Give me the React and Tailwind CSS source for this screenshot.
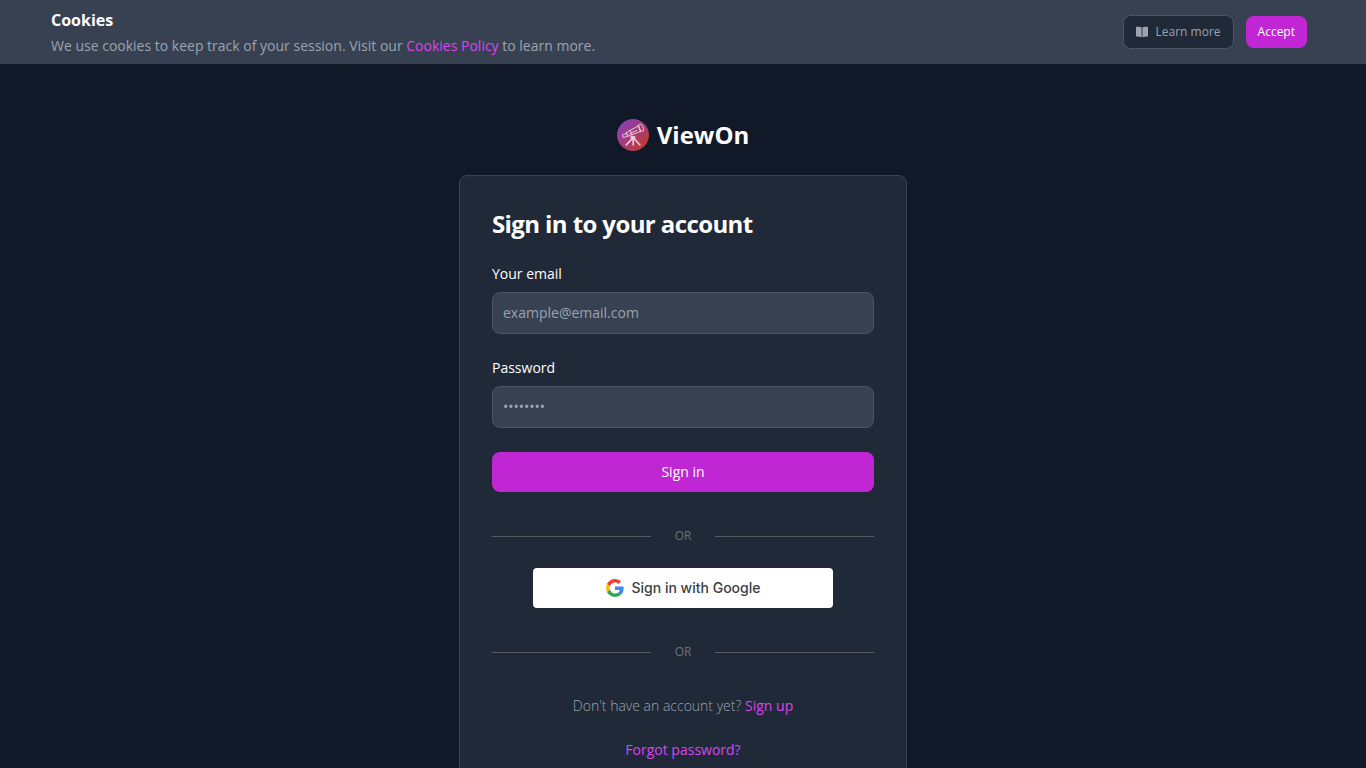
const FONT = "font-['Open_Sans',sans-serif]";

function BookIcon() {
  return (
    <svg className="h-3 w-3" viewBox="0 0 12 12" fill="currentColor" aria-hidden="true">
      <path d="M5.6 1.300C4 .9 2 .8.5.8.200.8 0 1 0 1.300v8.600c0 .3.200.5.500.500 1.700 0 3.500.2 5.100.8zM6.400 1.300C8 .9 10 .8 11.500.8c.3 0 .5.200.5.500v8.600c0 .3-.2.5-.5.500-1.700 0-3.500.2-5.100.8z" />
    </svg>
  );
}

function GoogleIcon() {
  return (
    <svg className="h-[18px] w-[18px]" viewBox="0 0 48 48" aria-hidden="true">
      <path fill="#EA4335" d="M24 9.500c3.540 0 6.710 1.220 9.210 3.600l6.850-6.850C35.900 2.380 30.470 0 24 0 14.620 0 6.510 5.380 2.560 13.220l7.980 6.190C12.430 13.720 17.740 9.500 24 9.500z" />
      <path fill="#4285F4" d="M46.980 24.550c0-1.570-.15-3.090-.38-4.550H24v9.020h12.940c-.58 2.960-2.260 5.480-4.780 7.180l7.730 6c4.510-4.180 7.090-10.360 7.090-17.650z" />
      <path fill="#FBBC05" d="M10.530 28.590c-.48-1.450-.76-2.990-.76-4.590s.27-3.140.76-4.590l-7.980-6.190C.92 16.460 0 20.120 0 24c0 3.880.92 7.540 2.560 10.780l7.970-6.190z" />
      <path fill="#34A853" d="M24 48c6.480 0 11.930-2.130 15.890-5.810l-7.730-6c-2.150 1.450-4.920 2.300-8.160 2.300-6.260 0-11.570-4.220-13.470-9.910l-7.980 6.190C6.510 42.620 14.620 48 24 48z" />
    </svg>
  );
}

function Logo() {
  return (
    <svg className="mr-2 h-8 w-8" viewBox="0 0 32 32" fill="none" aria-hidden="true">
      <defs>
        <linearGradient id="logo-bg" x1="4" y1="4" x2="27" y2="28" gradientUnits="userSpaceOnUse">
          <stop offset="0" stopColor="#8b3fb5" />
          <stop offset="0.5" stopColor="#a43c78" />
          <stop offset="1" stopColor="#c23a32" />
        </linearGradient>
      </defs>
      <circle cx="16" cy="16" r="16" fill="url(#logo-bg)" />
      <g stroke="#efc9d8" strokeLinejoin="round" strokeLinecap="round">
        {/* tube */}
        <path d="M5.500 16l4.200-1.700 1.200 2.600-4.200 1.700z" />
        <path d="M9.300 13.600l12.200-6.900 2.400 5.500-12.700 5z" />
        <path d="M21.300 6.200l2.600-1c1.800 1.700 2.800 3.800 2.800 6.300l-2.700 1.100z" />
        <path d="M13.300 11.500l1.900 4.200M12.600 14.700l7-3.200" />
        {/* tripod */}
        <path d="M14.300 17.400h3.600v2.100h-3.600z" fill="#efc9d8" />
        <path d="M15.300 19.500l-6 6.300M17 19.500l5.700 6.300M16.200 19.500v6.300" strokeWidth="1.700" />
      </g>
    </svg>
  );
}

function CookieBanner() {
  return (
    <div className="bg-[#374151]">
      <div className="mx-auto flex max-w-7xl items-center justify-between py-2 pr-4 pl-2">
        <div>
          <h2 className="text-base font-bold text-white">Cookies</h2>
          <p className="mt-1 text-sm text-[#9ca3af]">
            We use cookies to keep track of your session. Visit our{' '}
            <a href="#policy" className="text-[#d946ef] hover:underline">Cookies Policy</a> to learn more.
          </p>
        </div>
        <div className="flex shrink-0 items-center gap-3">
          <button type="button" className="flex h-[34px] items-center gap-2 rounded-lg border border-[#4b5563] bg-[#1f2937] px-3 text-xs text-[#9ca3af]">
            <BookIcon />
            Learn more
          </button>
          <button type="button" className="h-8 rounded-lg bg-[#c026d3] px-3 text-xs text-white">Accept</button>
        </div>
      </div>
    </div>
  );
}

function Field({ id, label, type, placeholder }) {
  return (
    <div>
      <label htmlFor={id} className="mb-2 block text-sm text-white">{label}</label>
      <input
        id={id}
        type={type}
        placeholder={placeholder}
        className="block w-full rounded-lg border border-[#4b5563] bg-[#374151] p-2.5 text-sm text-white placeholder:text-[#9ca3af]"
      />
    </div>
  );
}

function Divider() {
  return (
    <div className="mt-9 flex items-center gap-6 text-xs text-[#6e7276]">
      <span className="h-px flex-1 bg-[#565c62]" />
      OR
      <span className="h-px flex-1 bg-[#565c62]" />
    </div>
  );
}

export default function App() {
  return (
    <div className={`min-h-screen bg-[#111827] ${FONT}`}>
      <CookieBanner />

      <main className="flex flex-col items-center px-6 pt-[55px] pb-8">
        <a href="#home" className="mb-6 flex items-center text-2xl font-bold text-white">
          <Logo />
          ViewOn
        </a>

        <div className="w-full max-w-md rounded-lg border border-[#374151] bg-[#1f2937] p-8">
          <h1 className="text-2xl font-bold tracking-tight text-white">Sign in to your account</h1>

          <form className="mt-6 space-y-6" onSubmit={(e) => e.preventDefault()}>
            <Field id="email" label="Your email" type="email" placeholder="example@email.com" />
            <Field id="password" label="Password" type="password" placeholder="••••••••" />
            <button type="submit" className="h-10 w-full rounded-lg bg-[#c026d3] text-sm text-white">Sign in</button>
          </form>

          <Divider />

          <button
            type="button"
            className="mx-auto mt-6 flex h-10 w-full max-w-[300px] items-center justify-center gap-2 rounded bg-white font-['Inter',sans-serif] text-sm font-medium text-[#3c4043]"
          >
            <GoogleIcon />
            Sign in with Google
          </button>

          <Divider />

          <p className="mt-9 text-center text-sm font-light text-[#9ca3af]">
            Don't have an account yet?{' '}
            <a href="#signup" className="font-normal text-[#d946ef] hover:underline">Sign up</a>
          </p>
          <p className="mt-6 text-center text-sm">
            <a href="#forgot" className="text-[#d946ef] hover:underline">Forgot password?</a>
          </p>
        </div>
      </main>
    </div>
  );
}
